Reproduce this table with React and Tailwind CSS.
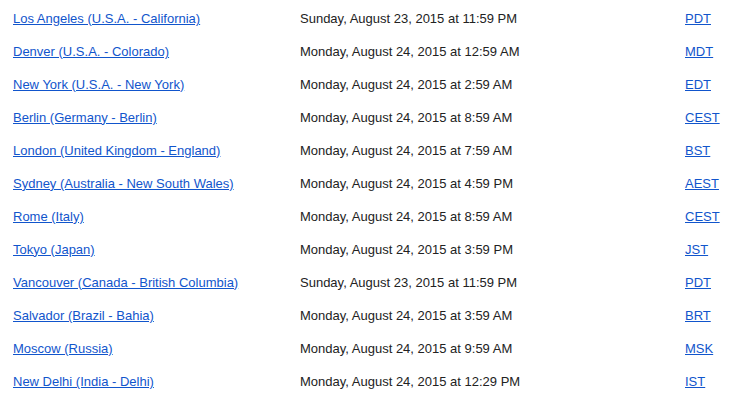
import React from "react";

const rows = [
  ["Los Angeles (U.S.A. - California)", "Sunday, August 23, 2015 at 11:59 PM", "PDT"],
  ["Denver (U.S.A. - Colorado)", "Monday, August 24, 2015 at 12:59 AM", "MDT"],
  ["New York (U.S.A. - New York)", "Monday, August 24, 2015 at 2:59 AM", "EDT"],
  ["Berlin (Germany - Berlin)", "Monday, August 24, 2015 at 8:59 AM", "CEST"],
  ["London (United Kingdom - England)", "Monday, August 24, 2015 at 7:59 AM", "BST"],
  ["Sydney (Australia - New South Wales)", "Monday, August 24, 2015 at 4:59 PM", "AEST"],
  ["Rome (Italy)", "Monday, August 24, 2015 at 8:59 AM", "CEST"],
  ["Tokyo (Japan)", "Monday, August 24, 2015 at 3:59 PM", "JST"],
  ["Vancouver (Canada - British Columbia)", "Sunday, August 23, 2015 at 11:59 PM", "PDT"],
  ["Salvador (Brazil - Bahia)", "Monday, August 24, 2015 at 3:59 AM", "BRT"],
  ["Moscow (Russia)", "Monday, August 24, 2015 at 9:59 AM", "MSK"],
  ["New Delhi (India - Delhi)", "Monday, August 24, 2015 at 12:29 PM", "IST"],
];

export default function App() {
  return (
    <div className="w-[733px] h-[402px] bg-white pt-[2px] font-['Liberation_Sans',Arial,sans-serif] text-[13px] text-[#222]">
      {rows.map(([city, time, zone], i) => (
        <div key={i} className="flex items-center h-[33px]">
          <div className="w-[300px] pl-[13px]">
            <a href="#" className="text-[#1155cc] underline">
              {city}
            </a>
          </div>
          <span className="w-[385px]">{time}</span>
          <a href="#" className="text-[#1155cc] underline">
            {zone}
          </a>
        </div>
      ))}
    </div>
  );
}
